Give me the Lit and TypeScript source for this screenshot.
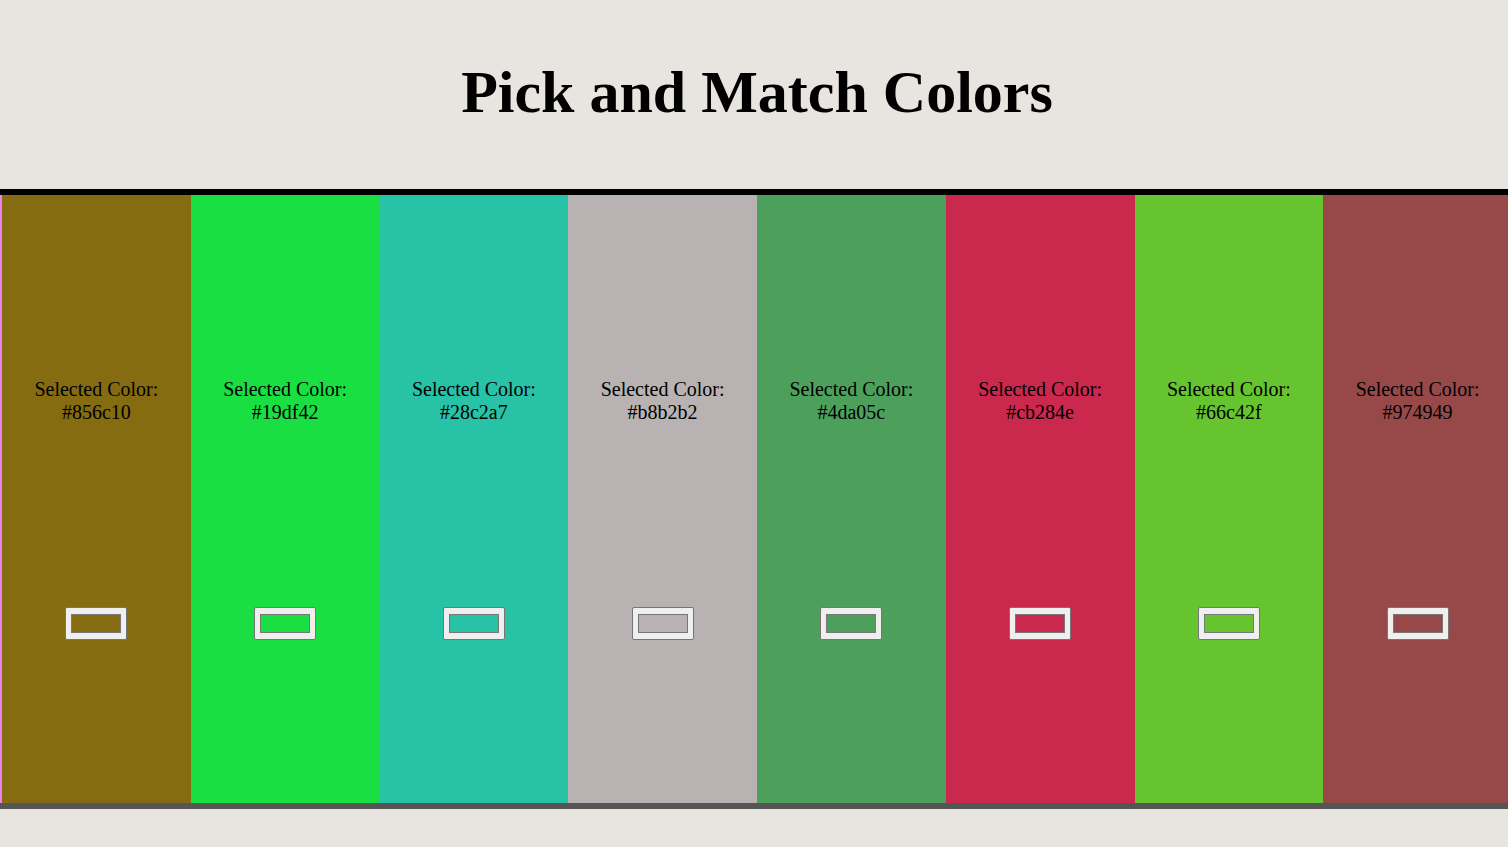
import { LitElement, html, css } from "lit";
import { customElement, state } from "lit/decorators.js";
import { styleMap } from "lit/directives/style-map.js";

@customElement("app-root")
export class AppRoot extends LitElement {
  static styles = css`
    :host {
      display: block;
      min-height: 100vh;
      overflow-x: hidden;
      background: #e8e4df;
      color: #000;
      font-family: "Liberation Serif", "Times New Roman", serif;
    }
    .page {
      display: flex;
      flex-direction: column;
      box-sizing: border-box;
      width: calc(100% + 4px);
      min-height: 100vh;
      padding-bottom: 38px;
    }
    .header {
      padding: 58px 0 62px 2px;
      text-align: center;
    }
    .title {
      margin: 0;
      font-size: 60px;
      line-height: 69px;
      font-weight: bold;
    }
    .palette {
      flex: 1;
      display: flex;
      background: violet;
      border-top: 6px solid #000;
      border-bottom: 6px solid #555;
      padding: 0 0 0 2px;
    }
    .column {
      flex: 1;
      display: flex;
      flex-direction: column;
      align-items: center;
      justify-content: space-evenly;
    }
    .label {
      margin: 20px 0;
      font-size: 20px;
      line-height: 23px;
      text-align: center;
    }
    .value {
      display: block;
    }
    .picker {
      box-sizing: border-box;
      width: 62px;
      height: 33px;
      margin: 0;
      padding: 2px 3px;
      border: 1px solid #767676;
      border-radius: 2px;
      background: #efefef;
    }
  `;

  @state()
  private colors: string[] = [
    "#856c10",
    "#19df42",
    "#28c2a7",
    "#b8b2b2",
    "#4da05c",
    "#cb284e",
    "#66c42f",
    "#974949",
  ];

  private pick(index: number, event: Event) {
    const value = (event.target as HTMLInputElement).value;
    this.colors = this.colors.map((c, i) => (i === index ? value : c));
  }

  render() {
    return html`
      <div class="page">
        <header class="header">
          <h1 class="title">Pick and Match Colors</h1>
        </header>
        <main class="palette">
          ${this.colors.map(
            (color, i) => html`
              <section class="column" style=${styleMap({ backgroundColor: color })}>
                <label class="label" for="color-${i}"
                  >Selected Color: <span class="value">${color}</span></label
                >
                <input
                  class="picker"
                  id="color-${i}"
                  type="color"
                  .value=${color}
                  @input=${(e: Event) => this.pick(i, e)}
                />
              </section>
            `
          )}
        </main>
      </div>
    `;
  }
}
